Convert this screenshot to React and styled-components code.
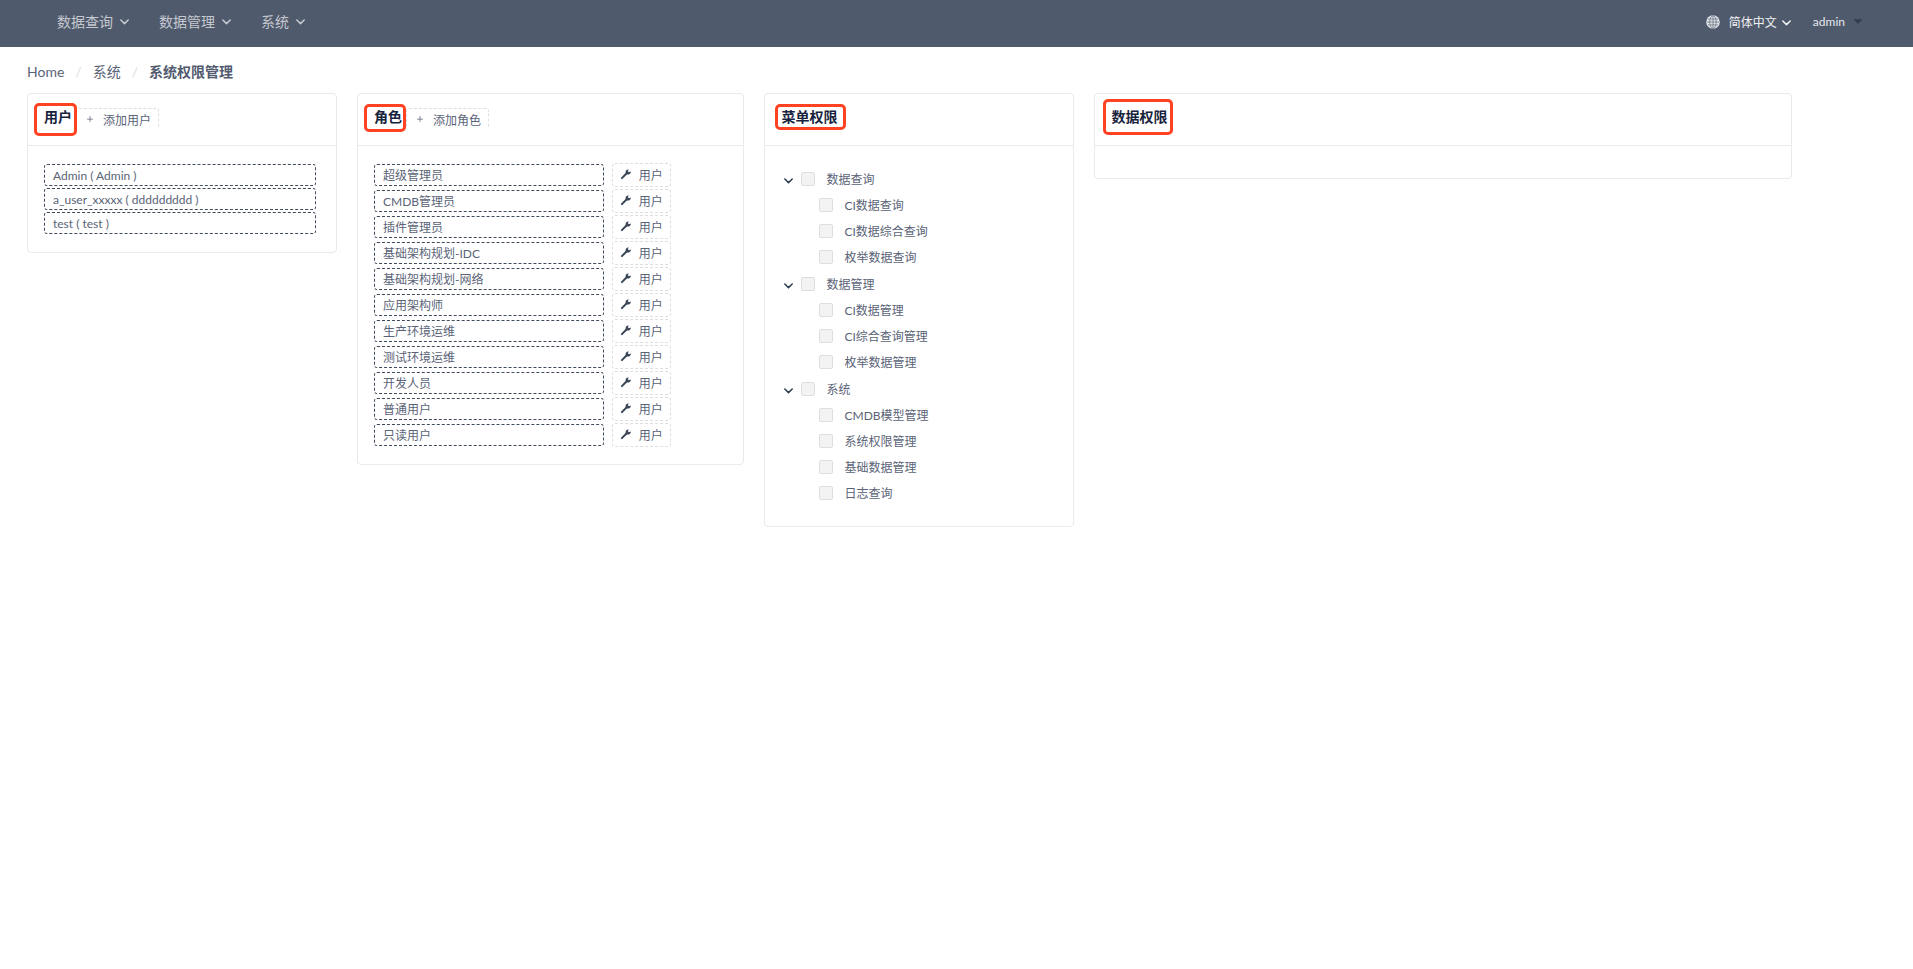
import React from 'react';

import { IoIosAdd } from 'react-icons/io';
import styled, { createGlobalStyle } from 'styled-components';

const menus = [
  { name: '数据查询', children: ['CI数据查询', 'CI数据综合查询', '枚举数据查询'] },
  { name: '数据管理', children: ['CI数据管理', 'CI综合查询管理', '枚举数据管理'] },
  { name: '系统', children: ['CMDB模型管理', '系统权限管理', '基础数据管理', '日志查询'] },
];

const users = ['Admin ( Admin )', 'a_user_xxxxx ( ddddddddd )', 'test ( test )'];

const roles = [
  '超级管理员',
  'CMDB管理员',
  '插件管理员',
  '基础架构规划-IDC',
  '基础架构规划-网络',
  '应用架构师',
  '生产环境运维',
  '测试环境运维',
  '开发人员',
  '普通用户',
  '只读用户',
];

const Chevron = () => (
  <ChevronIcon width="9" height="6" viewBox="0 0 9 6" aria-hidden="true">
    <path d="M0.8 1 L4.5 4.6 L8.2 1" />
  </ChevronIcon>
);

const Caret = () => (
  <svg width="10" height="5" viewBox="0 0 10 5" fill="#2c3e50" aria-hidden="true">
    <path d="M0.5 0.3 H9.5 L5 4.8 Z" />
  </svg>
);

const Globe = () => (
  <svg width="14" height="14" viewBox="0 0 14 14" aria-hidden="true">
    <circle cx="7" cy="7" r="6.8" fill="#dfe2e6" />
    <g fill="none" stroke="#505a6d" strokeWidth="0.6">
      <path d="M7 1V13M1 7H13M2 4.1H12M2 9.9H12" />
      <ellipse cx="7" cy="7" rx="3.2" ry="6.3" />
    </g>
  </svg>
);

const Wrench = () => (
  <svg width="12" height="12" viewBox="0 0 12 12" aria-hidden="true">
    <path d="M1.9 10.1 L7 5" stroke="#3c4659" strokeWidth="2" strokeLinecap="round" />
    <path
      d="M5.6 5.2 C5.2 3.2 6.4 1.4 8.6 1.2 L7.9 3.2 L8.9 4.2 L11 3.4 C10.9 5.6 9 6.9 6.9 6.4 Z"
      fill="#3c4659"
    />
  </svg>
);

const Card = ({ title, span, mark, action, children }) => (
  <CardBox $span={span}>
    <CardHead>
      <CardTitle>
        <Title>{title}</Title>
        {action && (
          <DashedButton type="button">
            <IoIosAdd size={12} />
            {action}
          </DashedButton>
        )}
      </CardTitle>
      <Mark $box={mark} />
    </CardHead>
    <CardBody>{children}</CardBody>
  </CardBox>
);

const App = () => {
  return (
    <>
      <GlobalStyle />
      <Header>
        <Nav>
          {menus.map(({ name }) => (
            <NavItem key={name} type="button">
              {name}
              <Chevron />
            </NavItem>
          ))}
        </Nav>
        <Profile>
          <Language type="button">
            <Globe />
            <span>简体中文</span>
            <Chevron />
          </Language>
          <Account type="button">
            admin
            <Caret />
          </Account>
        </Profile>
      </Header>
      <Content>
        <Breadcrumb>
          <Crumb href="#home">Home</Crumb>
          <Separator>/</Separator>
          <Crumb href="#system">系统</Crumb>
          <Separator>/</Separator>
          <Current>系统权限管理</Current>
        </Breadcrumb>
        <Row>
          <Card title="用户" span={4} action="添加用户" mark={[6, 9, 43, 33]}>
            {users.map((user) => (
              <UserTag key={user}>{user}</UserTag>
            ))}
          </Card>
          <Card title="角色" span={5} action="添加角色" mark={[6, 10, 42, 28]}>
            {roles.map((role) => (
              <RoleRow key={role}>
                <RoleTag>{role}</RoleTag>
                <DashedButton type="button">
                  <Wrench />
                  用户
                </DashedButton>
              </RoleRow>
            ))}
          </Card>
          <Card title="菜单权限" span={4} mark={[10, 10, 71, 26]}>
            <Tree>
              {menus.map(({ name, children }) => (
                <div key={name}>
                  <TreeRow>
                    <Toggle type="button" aria-label={name}>
                      <Chevron />
                    </Toggle>
                    <Label>
                      <Checkbox disabled />
                      <span>{name}</span>
                    </Label>
                  </TreeRow>
                  {children.map((child) => (
                    <TreeRow key={child} $nested>
                      <Label>
                        <Checkbox disabled />
                        <span>{child}</span>
                      </Label>
                    </TreeRow>
                  ))}
                </div>
              ))}
            </Tree>
          </Card>
          <Card title="数据权限" span={9} mark={[8, 5, 70, 36]} />
        </Row>
      </Content>
    </>
  );
};

const GlobalStyle = createGlobalStyle`
  * {
    box-sizing: border-box;
  }
  body {
    margin: 0;
    background: #fff;
    color: #5a6377;
    font-family: Lato, "Noto Sans CJK SC", sans-serif;
    font-size: 12px;
  }
  button {
    font-family: inherit;
    cursor: pointer;
  }
`;

const ChevronIcon = styled.svg`
  margin-top: 3px;
  fill: none;
  stroke: currentColor;
  stroke-width: 1.5;
  stroke-linecap: round;
  stroke-linejoin: round;
`;

const Header = styled.header`
  display: flex;
  justify-content: space-between;
  height: 47px;
  padding: 0 50px 4px 57px;
  background: #505a6d;
`;

const Nav = styled.nav`
  display: flex;
  gap: 30px;
`;

const NavItem = styled.button`
  display: flex;
  align-items: center;
  gap: 7px;
  padding: 0 0 2px;
  border: 0;
  background: none;
  color: #c5c8ce;
  font-size: 14px;
`;

const Profile = styled.div`
  display: flex;
  gap: 22px;
`;

const Language = styled(NavItem)`
  gap: 5px;
  padding: 0;
  color: #f0f1f3;
  font-size: 12px;
  span {
    margin-left: 4px;
  }
`;

const Account = styled(Language)`
  gap: 8px;
  color: #e6e8eb;
`;

const Content = styled.main`
  padding: 12px 26px 12px 27px;
`;

const Breadcrumb = styled.nav`
  display: flex;
  align-items: center;
  height: 24px;
  margin-bottom: 10px;
  font-size: 14px;
`;

const Crumb = styled.a`
  color: #5a6377;
  text-decoration: none;
`;

const Separator = styled.span`
  margin: 0 11px;
  color: #dcdee2;
`;

const Current = styled.span`
  color: #515a6e;
  font-weight: 700;
`;

const Row = styled.div`
  display: flex;
  align-items: flex-start;
  gap: 20px;
`;

const CardBox = styled.section`
  flex: none;
  width: calc(100% * ${({ $span }) => $span} / 24);
  border: 1px solid #e8eaec;
  border-radius: 4px;
`;

const CardHead = styled.div`
  position: relative;
  padding: 14px 16px 17px;
  border-bottom: 1px solid #e8eaec;
`;

const CardTitle = styled.div`
  display: flex;
  align-items: flex-start;
  gap: 4px;
  height: 20px;
  overflow: hidden;
`;

const Title = styled.h2`
  margin: 0;
  color: #17233d;
  font-size: 14px;
  font-weight: 700;
  line-height: 18px;
`;

/* red frame drawn round a card title: [left, top, width, height] */
const Mark = styled.span`
  position: absolute;
  left: ${({ $box }) => $box[0]}px;
  top: ${({ $box }) => $box[1]}px;
  width: ${({ $box }) => $box[2]}px;
  height: ${({ $box }) => $box[3]}px;
  border: 3px solid #ff4221;
  border-radius: 5px;
  pointer-events: none;
`;

const CardBody = styled.div`
  padding: 16px;
`;

const DashedButton = styled.button`
  display: flex;
  flex: none;
  align-items: center;
  gap: 7px;
  height: 24px;
  padding: 0 7px 2px;
  border: 1px dashed #dcdee2;
  border-radius: 3px;
  background: #fff;
  color: #5a6377;
  font-size: 12px;
`;

const Tag = styled.div`
  height: 22px;
  padding: 0 8px;
  border: 1px dashed #3f4b5b;
  border-radius: 3px;
  line-height: 22px;
  white-space: nowrap;
`;

const UserTag = styled(Tag)`
  margin: 2px 4px 2px 0;
`;

const RoleTag = styled(Tag)`
  width: 65%;
`;

const RoleRow = styled.div`
  display: flex;
  align-items: center;
  gap: 8px;
  height: 26px;
`;

const Tree = styled.div`
  display: flex;
  flex-direction: column;
  gap: 1px;
  padding: 4px 0;
`;

const TreeRow = styled.div`
  display: flex;
  align-items: center;
  height: 26px;
  padding-left: ${({ $nested }) => ($nested ? 38 : 0)}px;
`;

const Toggle = styled.button`
  display: flex;
  justify-content: center;
  width: 20px;
  padding: 0 5px 0 0;
  border: 0;
  background: none;
  color: #2c3e50;
`;

const Label = styled.label`
  display: flex;
  align-items: center;
  gap: 11px;
  span {
    padding-bottom: 2px;
  }
`;

const Checkbox = styled.input.attrs({ type: 'checkbox' })`
  appearance: none;
  width: 14px;
  height: 14px;
  margin: 0;
  border: 1px solid #dcdee2;
  border-radius: 2px;
  background: #f3f3f3;
`;

export default App;
